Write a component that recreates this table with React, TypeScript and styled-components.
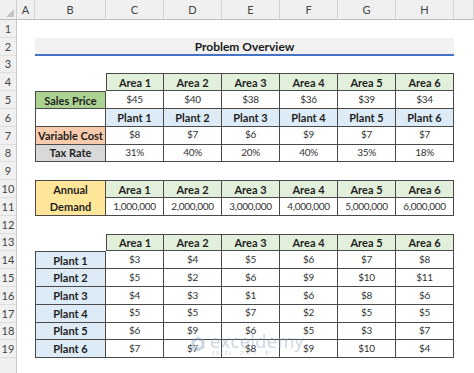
import React from 'react';
import styled, { createGlobalStyle } from 'styled-components';

const Global = createGlobalStyle`
  html, body { margin: 0; padding: 0; background: #fff; }
  body { font-family: Lato, "Liberation Sans", Arial, sans-serif; }
`;

const Sheet = styled.div`
  position: relative;
  width: 474px;
  height: 373px;
  overflow: hidden;
  display: grid;
  grid-template-columns: 17px 18px 71px repeat(6, 58px) 1fr;
  grid-template-rows: 20px repeat(20, 17.8px);
  background: #fff;
  color: #1f1f1f;
`;

const Corner = styled.div`
  grid-row: 1;
  grid-column: 1;
  position: relative;
  background: #f0f0f0;
  border-right: 1px solid #cfcfcf;
  border-bottom: 1px solid #bdbdbd;
  box-sizing: border-box;
  &::after {
    content: '';
    position: absolute;
    right: 2px;
    bottom: 2px;
    width: 0;
    height: 0;
    border-left: 8px solid transparent;
    border-bottom: 8px solid #c4c4c4;
  }
`;

const ColHead = styled.div<{ $col: number }>`
  grid-row: 1;
  grid-column: ${(p) => p.$col};
  background: #f0f0f0;
  border-right: 1px solid #d2d2d2;
  border-bottom: 1px solid #bdbdbd;
  box-sizing: border-box;
  display: flex;
  align-items: center;
  justify-content: center;
  font-size: 11px;
  color: #444;
`;

const RowHead = styled.div<{ $row: number }>`
  grid-row: ${(p) => p.$row};
  grid-column: 1;
  background: #f0f0f0;
  border-right: 1px solid #c9c9c9;
  border-bottom: 1px solid #dedede;
  box-sizing: border-box;
  display: flex;
  align-items: center;
  justify-content: center;
  font-size: 11px;
  color: #444;
`;

const Title = styled.div`
  grid-row: 3;
  grid-column: 3 / 10;
  background: #f2f2f2;
  border-bottom: 2px solid #4472c4;
  box-sizing: border-box;
  display: flex;
  align-items: center;
  justify-content: center;
  font-weight: 700;
  font-size: 12px;
  color: #1a1a1a;
  padding-top: 1px;
`;

const Cell = styled.div<{
  $row: number;
  $col: number;
  $span: number;
  $bg: string;
  $bold: boolean;
  $top: boolean;
  $left: boolean;
}>`
  grid-row: ${(p) => p.$row} / span ${(p) => p.$span};
  grid-column: ${(p) => p.$col};
  background: ${(p) => p.$bg};
  box-sizing: border-box;
  border-right: 1px solid #4a4a4a;
  border-bottom: 1px solid #4a4a4a;
  border-top: ${(p) => (p.$top ? '1px solid #4a4a4a' : 'none')};
  border-left: ${(p) => (p.$left ? '1px solid #4a4a4a' : 'none')};
  display: flex;
  align-items: center;
  justify-content: center;
  text-align: center;
  font-size: ${(p) => (p.$bold ? '11px' : '10px')};
  letter-spacing: ${(p) => (p.$bold ? '0' : '-0.3px')};
  font-weight: ${(p) => (p.$bold ? 700 : 400)};
  line-height: 1.55;
  white-space: pre-line;
  color: ${(p) => (p.$bold ? '#1f1f1f' : '#333')};
`;

const Watermark = styled.div`
  position: absolute;
  left: 189px;
  top: 332px;
  display: flex;
  align-items: center;
  gap: 3px;
  opacity: 0.4;
  pointer-events: none;
`;

const MarkText = styled.div`
  display: flex;
  flex-direction: column;
  align-items: flex-start;
  color: #7f9ab8;
`;

const MarkWord = styled.span`
  font-family: "Open Sans", Lato, sans-serif;
  font-size: 18px;
  line-height: 18px;
  letter-spacing: 0.5px;
`;

const MarkSub = styled.span`
  font-size: 5px;
  letter-spacing: 1.2px;
  line-height: 6px;
  padding-left: 2px;
`;

type CellDef = {
  r: number;
  c: number;
  text: string;
  bg: string;
  bold?: boolean;
  span?: number;
};

const GREEN = '#e2efda';
const DGREEN = '#acd292';
const BLUE = '#ddebf7';
const ORANGE = '#f8cbad';
const GRAY = '#d9d9d9';
const YELLOW = '#ffe699';
const WHITE = '#ffffff';

const areas = ['Area 1', 'Area 2', 'Area 3', 'Area 4', 'Area 5', 'Area 6'];
const plants = ['Plant 1', 'Plant 2', 'Plant 3', 'Plant 4', 'Plant 5', 'Plant 6'];
const sales = ['$45', '$40', '$38', '$36', '$39', '$34'];
const varCost = ['$8', '$7', '$6', '$9', '$7', '$7'];
const tax = ['31%', '40%', '20%', '40%', '35%', '18%'];
const demand = ['1,000,000', '2,000,000', '3,000,000', '4,000,000', '5,000,000', '6,000,000'];
const costs = [
  ['$3', '$4', '$5', '$6', '$7', '$8'],
  ['$5', '$2', '$6', '$9', '$10', '$11'],
  ['$4', '$3', '$1', '$6', '$8', '$6'],
  ['$5', '$5', '$7', '$2', '$5', '$5'],
  ['$6', '$9', '$6', '$5', '$3', '$7'],
  ['$7', '$7', '$8', '$9', '$10', '$4'],
];

// c: 0 = column B, 1..6 = columns C..H ; r = sheet row number
const defs: CellDef[] = [];
const addRow = (r: number, vals: string[], bg: string, bold = false) =>
  vals.forEach((v, i) => defs.push({ r, c: i + 1, text: v, bg, bold }));

addRow(4, areas, GREEN, true);
defs.push({ r: 5, c: 0, text: 'Sales Price', bg: DGREEN, bold: true });
addRow(5, sales, WHITE);
defs.push({ r: 6, c: 0, text: '', bg: WHITE });
addRow(6, plants, BLUE, true);
defs.push({ r: 7, c: 0, text: 'Variable Cost', bg: ORANGE, bold: true });
addRow(7, varCost, WHITE);
defs.push({ r: 8, c: 0, text: 'Tax Rate', bg: GRAY, bold: true });
addRow(8, tax, WHITE);

defs.push({ r: 10, c: 0, text: 'Annual\nDemand', bg: YELLOW, bold: true, span: 2 });
addRow(10, areas, GREEN, true);
addRow(11, demand, WHITE);

addRow(13, areas, GREEN, true);
costs.forEach((row, i) => {
  defs.push({ r: 14 + i, c: 0, text: plants[i], bg: BLUE, bold: true });
  addRow(14 + i, row, WHITE);
});

const occupied = new Set<string>();
defs.forEach((d) => {
  for (let k = 0; k < (d.span ?? 1); k++) occupied.add(`${d.r + k},${d.c}`);
});

const letters = ['A', 'B', 'C', 'D', 'E', 'F', 'G', 'H', ''];
const rowNums = Array.from({ length: 20 }, (_, i) => i + 1);

export default function App() {
  return (
    <>
      <Global />
      <Sheet>
        <Corner />
        {letters.map((l, i) => (
          <ColHead key={`h${i}`} $col={i + 2}>
            {l}
          </ColHead>
        ))}
        {rowNums.map((n) => (
          <RowHead key={`r${n}`} $row={n + 1}>
            {n <= 19 ? n : ''}
          </RowHead>
        ))}
        <Title>Problem Overview</Title>
        {defs.map((d) => (
          <Cell
            key={`${d.r}-${d.c}`}
            $row={d.r + 1}
            $col={d.c + 3}
            $span={d.span ?? 1}
            $bg={d.bg}
            $bold={!!d.bold}
            $top={!occupied.has(`${d.r - 1},${d.c}`)}
            $left={!occupied.has(`${d.r},${d.c - 1}`)}
          >
            {d.text}
          </Cell>
        ))}
        <Watermark>
          <svg width="18" height="18" viewBox="0 0 18 18">
            <path d="M9 1.5 L15.5 5.25 L15.5 12.75 L9 16.5 L2.5 12.75 L2.5 5.25 Z" fill="#7f9ab8" />
            <path d="M9 5 L12.5 7 L12.5 11 L9 13 L5.5 11 L5.5 7 Z" fill="#ffffff" />
          </svg>
          <MarkText>
            <MarkWord>exceldemy</MarkWord>
            <MarkSub>EXCEL · DATA · BI</MarkSub>
          </MarkText>
        </Watermark>
      </Sheet>
    </>
  );
}
